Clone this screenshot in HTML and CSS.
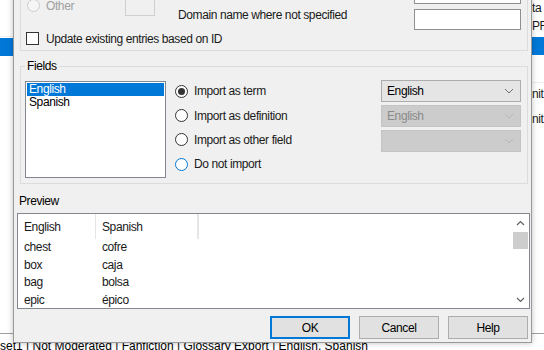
FILE: index.html
```html
<!DOCTYPE html>
<html lang="en">
<head>
    <meta charset="UTF-8">
    <title>Import Glossary</title>
    <link rel="stylesheet" href="styles.css">
</head>
<body>
    <div class="app">
        <div class="strip">
            <div class="strip-gap"></div>
            <div class="strip-row selected"></div>
        </div>
        <div class="app-middle"></div>
        <div class="strip right">
            <div class="strip-row">ta</div>
            <div class="strip-row">PR</div>
            <div class="strip-row selected"></div>
            <div class="strip-space"></div>
            <div class="strip-row">nit</div>
            <div class="strip-row">nit</div>
        </div>
        <div class="status">set1 | Not Moderated | Fanfiction | Glossary Export | English, Spanish</div>
    </div>

    <div class="dialog">
        <div class="group">
            <div class="top-row">
                <div class="other-col">
                    <label class="radio disabled"><span class="dot"></span>Other</label>
                    <span class="blank-box"></span>
                </div>
                <div class="domain-text">Domain name where not specified</div>
                <div class="inputs">
                    <span class="textbox"></span>
                    <span class="textbox"></span>
                </div>
            </div>
            <label class="check"><span class="box"></span>Update existing entries based on ID</label>
        </div>

        <fieldset class="fields">
            <legend>Fields</legend>
            <div class="fields-body">
                <div class="listbox">
                    <div class="list-item active">English</div>
                    <div class="list-item">Spanish</div>
                </div>
                <div class="radios">
                    <label class="radio checked"><span class="dot"></span>Import as term</label>
                    <label class="radio"><span class="dot"></span>Import as definition</label>
                    <label class="radio"><span class="dot"></span>Import as other field</label>
                    <label class="radio focus"><span class="dot"></span>Do not import</label>
                </div>
                <div class="combos">
                    <div class="combo">English<svg width="10" height="6" viewBox="0 0 10 6"><path d="M1 1l4 4 4-4" fill="none" stroke="#707070" stroke-width="1"/></svg></div>
                    <div class="combo disabled">English<svg width="10" height="6" viewBox="0 0 10 6"><path d="M1 1l4 4 4-4" fill="none" stroke="#b5b5b5" stroke-width="1"/></svg></div>
                    <div class="combo disabled"><svg width="10" height="6" viewBox="0 0 10 6"><path d="M1 1l4 4 4-4" fill="none" stroke="#b5b5b5" stroke-width="1"/></svg></div>
                </div>
            </div>
        </fieldset>

        <div class="preview-label">Preview</div>
        <div class="preview">
            <div class="grid">
                <div class="grid-head">
                    <span class="col c1">English</span>
                    <span class="col c2">Spanish</span>
                    <span class="col c3"></span>
                </div>
                <div class="grid-row"><span class="col c1">chest</span><span class="col c2">cofre</span></div>
                <div class="grid-row"><span class="col c1">box</span><span class="col c2">caja</span></div>
                <div class="grid-row"><span class="col c1">bag</span><span class="col c2">bolsa</span></div>
                <div class="grid-row"><span class="col c1">epic</span><span class="col c2">épico</span></div>
            </div>
            <div class="scrollbar">
                <span class="arrow"><svg width="9" height="6" viewBox="0 0 9 6"><path d="M1 5l3.5-3.5L8 5" fill="none" stroke="#606060" stroke-width="1.2"/></svg></span>
                <span class="thumb"></span>
                <span class="track"></span>
                <span class="arrow"><svg width="9" height="6" viewBox="0 0 9 6"><path d="M1 1l3.5 3.5L8 1" fill="none" stroke="#606060" stroke-width="1.2"/></svg></span>
            </div>
        </div>

        <div class="buttons">
            <button class="btn default">OK</button>
            <button class="btn">Cancel</button>
            <button class="btn">Help</button>
        </div>
    </div>
</body>
</html>
```

FILE: styles.css
```css
body {
    margin: 0;
    width: 544px;
    height: 350px;
    overflow: hidden;
    position: relative;
    font-family: "Liberation Sans", Arial, sans-serif;
    font-size: 12px;
    letter-spacing: -0.4px;
    color: #1a1a1a;
    background: #fff;
}

/* application behind the dialog */
.app {
    display: grid;
    grid-template-columns: 13px 1fr 13px;
    grid-template-rows: 333px 17px;
    height: 350px;
}

.strip {
    display: flex;
    flex-direction: column;
    overflow: hidden;
    white-space: nowrap;
}

.strip-gap {
    height: 37px;
    border-bottom: 1px solid #f0f0f0;
    box-sizing: border-box;
}

.strip-row {
    height: 18px;
    line-height: 17px;
}

.strip-row.selected {
    background: #0078d7;
    margin-top: 1px;
}

.strip.right .strip-row {
    padding-left: 1px;
}

.strip-space {
    height: 27px;
    border-bottom: 1px solid #eeeeee;
}

.strip.right .strip-row:nth-last-child(2) {
    margin-top: 3px;
    height: 25px;
}

.status {
    grid-column: 1 / 4;
    border-top: 1px solid #a0a0a0;
    padding-top: 5px;
    line-height: 15px;
    white-space: nowrap;
    overflow: hidden;
    color: #000;
    letter-spacing: 0;
}

/* dialog window */
.dialog {
    position: absolute;
    left: 13px;
    top: -40px;
    width: 519px;
    height: 383px;
    box-sizing: border-box;
    border: 1px solid #999;
    background: #f0f0f0;
    box-shadow: 0 0 6px rgba(0, 0, 0, 0.25);
    display: flex;
    flex-direction: column;
}

.group {
    margin: 9px 3px 0 6px;
    border: 1px solid #dcdcdc;
    padding: 12px 6px 5px 5px;
}

.top-row {
    display: flex;
    height: 47px;
}

.other-col {
    width: 129px;
    display: flex;
    align-items: flex-start;
}

.other-col .radio {
    margin-top: 16px;
    height: 13px;
}

.blank-box {
    margin-left: auto;
    margin-top: 1px;
    width: 30px;
    height: 32px;
    box-sizing: border-box;
    border: 1px solid #cfcfcf;
}

.domain-text {
    margin-left: 23px;
    margin-top: 25px;
    line-height: 15px;
}

.inputs {
    margin-left: auto;
    width: 107px;
    display: flex;
    flex-direction: column;
    gap: 5px;
}

.textbox {
    height: 21px;
    box-sizing: border-box;
    border: 1px solid #8f8f8f;
    background: #fff;
}

.check {
    display: flex;
    align-items: center;
    margin-top: 2px;
    height: 13px;
}

.check .box {
    width: 13px;
    height: 13px;
    box-sizing: border-box;
    border: 1px solid #333;
    background: #fff;
    margin-right: 7px;
}

/* radio buttons */
.radio {
    display: flex;
    align-items: center;
}

.radio .dot {
    width: 13px;
    height: 13px;
    box-sizing: border-box;
    border: 1px solid #333;
    border-radius: 50%;
    background: #fff;
    margin-right: 6px;
    display: flex;
    align-items: center;
    justify-content: center;
}

.radio.checked .dot::after {
    content: "";
    width: 7px;
    height: 7px;
    border-radius: 50%;
    background: #333;
}

.radio.focus .dot {
    border-color: #0078d7;
}

.radio.disabled {
    color: #a0a0a0;
}

.radio.disabled .dot {
    border-color: #cccccc;
    background: #f5f5f5;
    margin-left: 1px;
}

/* fields group */
.fields {
    margin: 8px 3px 0 6px;
    border: 1px solid #dcdcdc;
    padding: 7px 6px 5px 4px;
    min-width: 0;
}

.fields legend {
    padding: 0 2px;
    line-height: 15px;
    color: #000;
}

.fields-body {
    display: flex;
    align-items: flex-start;
}

.listbox {
    width: 141px;
    height: 97px;
    box-sizing: border-box;
    border: 1px solid #828790;
    background: #fff;
    padding: 1px;
}

.list-item {
    line-height: 13px;
    padding-left: 2px;
    color: #000;
}

.list-item.active {
    background: #0078d7;
    color: #fff;
}

.radios {
    margin-left: 9px;
    margin-top: -2px;
    display: flex;
    flex-direction: column;
}

.radios .radio {
    height: 24.4px;
}

.combos {
    margin-left: auto;
    margin-top: -1px;
    width: 140px;
    display: flex;
    flex-direction: column;
    gap: 3px;
}

.combo {
    height: 22px;
    box-sizing: border-box;
    border: 1px solid #adadad;
    background: #e5e5e5;
    display: flex;
    align-items: center;
    justify-content: space-between;
    padding: 0 6px 0 5px;
    color: #000;
}

.combo.disabled {
    background: #cccccc;
    border-color: #c4c4c4;
    color: #8a8a8a;
}

.combo svg {
    margin-left: auto;
}

/* preview */
.preview-label {
    margin: 10px 0 0 5px;
    line-height: 15px;
    color: #000;
}

.preview {
    margin: 4px 1px 0 3px;
    height: 96px;
    box-sizing: border-box;
    border: 1px solid #828790;
    background: #fff;
    display: flex;
    overflow: hidden;
}

.grid {
    flex: 1;
}

.grid-head {
    display: flex;
    height: 25px;
    align-items: center;
}

.grid-head .col {
    align-self: stretch;
    display: flex;
    align-items: center;
    border-right: 1px solid #e5e5e5;
}

.grid-row {
    display: flex;
    height: 17.7px;
    line-height: 17.7px;
}

.col {
    box-sizing: border-box;
}

.c1 {
    width: 78px;
    padding-left: 6px;
}

.c2 {
    width: 102px;
    padding-left: 6px;
}

.c3 {
    width: 1px;
}

.scrollbar {
    width: 17px;
    display: flex;
    flex-direction: column;
    background: #fff;
}

.arrow {
    height: 17px;
    display: flex;
    align-items: center;
    justify-content: center;
}

.thumb {
    margin: 1px 1px 0 1px;
    height: 17px;
    background: #cdcdcd;
}

.track {
    flex: 1;
}

/* buttons */
.buttons {
    margin: 7px 3px 0 0;
    display: flex;
    justify-content: flex-end;
    gap: 9px;
}

.btn {
    width: 80px;
    height: 23px;
    box-sizing: border-box;
    border: 1px solid #adadad;
    background: #e1e1e1;
    font-family: "Liberation Sans", Arial, sans-serif;
    font-size: 12px;
    letter-spacing: -0.4px;
    color: #000;
    padding: 0;
}

.btn.default {
    border: 2px solid #0078d7;
}
```
